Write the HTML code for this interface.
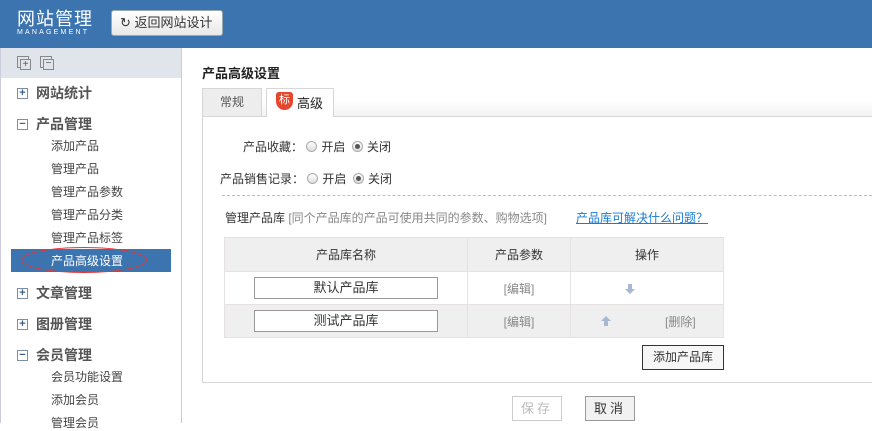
<!DOCTYPE html>
<html><head><meta charset="utf-8">
<style>
*{margin:0;padding:0;box-sizing:border-box}
body{width:872px;height:423px;overflow:hidden;background:#fff;font-family:"Liberation Sans","Noto Sans CJK SC",sans-serif;font-size:12px;color:#333;position:relative}
.a{position:absolute}
#hd{left:0;top:0;width:872px;height:48px;background:#3c74b0}
#sb{left:0;top:48px;width:182px;height:375px;border-left:1px solid #ccd;border-right:1px solid #ccc;background:#fff}
.t{font-size:14px;font-weight:bold;color:#555}
.s{font-size:12px;color:#444}
.box{width:11px;height:11px;border:1px solid #7d8ea6;font-size:11px;line-height:9px;text-align:center;color:#3c5f8a;font-weight:bold}
td,th{border:1px solid #e6e2e2;text-align:center;font-weight:normal;font-size:12px}
.inp{display:inline-block;width:184px;height:22px;border:1px solid #999;line-height:20px;font-size:13px;color:#333;background:#fff}
.rd{display:inline-block;width:11px;height:11px;border:1px solid #aaa;border-radius:50%;background:linear-gradient(#fff,#ddd);vertical-align:-1px;margin-right:4px;position:relative}
.rd.on::after{content:"";position:absolute;left:2px;top:2px;width:5px;height:5px;border-radius:50%;background:#555}
</style></head><body>
<div id="hd" class="a">
 <div class="a" style="left:17px;top:9px;color:#fff;font-size:18px;letter-spacing:1px;line-height:20px">网站管理</div>
 <div class="a" style="left:17px;top:29px;color:#fff;font-size:7px;letter-spacing:2.2px">MANAGEMENT</div>
 <div class="a" style="left:111px;top:10px;width:112px;height:26px;background:linear-gradient(#fff,#e8e8e8);border:1px solid #9aa;border-radius:3px;font-size:13px;line-height:24px;padding-left:8px;color:#333">↻ 返回网站设计</div>
</div>
<div id="sb" class="a">
 <div class="a" style="left:0;top:0;width:180px;height:30px;background:#e0e5ec"></div>
 <div class="a" style="left:16px;top:8px;width:12px;height:12px;border:1px solid #888"></div>
 <div class="a" style="left:19px;top:11px;width:11px;height:11px;border:1px solid #888;background:#e0e5ec;font-size:10px;line-height:9px;text-align:center;color:#555">+</div>
 <div class="a" style="left:39px;top:8px;width:12px;height:12px;border:1px solid #888"></div>
 <div class="a" style="left:42px;top:11px;width:11px;height:11px;border:1px solid #888;background:#e0e5ec;font-size:10px;line-height:8px;text-align:center;color:#555">−</div>
</div>
<div class="a box" style="left:17px;top:88px">+</div><div class="a t" style="left:36px;top:83px">网站统计</div>
<div class="a box" style="left:17px;top:119px">−</div><div class="a t" style="left:36px;top:114px">产品管理</div>
<div class="a s" style="left:51px;top:137px">添加产品</div>
<div class="a s" style="left:51px;top:160px">管理产品</div>
<div class="a s" style="left:51px;top:183px">管理产品参数</div>
<div class="a s" style="left:51px;top:206px">管理产品分类</div>
<div class="a s" style="left:51px;top:229px">管理产品标签</div>
<div class="a" style="left:11px;top:249px;width:160px;height:23px;background:#3c74b0"></div>
<div class="a" style="left:21px;top:247px;width:126px;height:26px;border:1px solid #e33;border-radius:50%"></div>
<div class="a s" style="left:51px;top:252px;color:#fff">产品高级设置</div>
<div class="a box" style="left:17px;top:288px">+</div><div class="a t" style="left:36px;top:283px">文章管理</div>
<div class="a box" style="left:17px;top:319px">+</div><div class="a t" style="left:36px;top:314px">图册管理</div>
<div class="a box" style="left:17px;top:350px">−</div><div class="a t" style="left:36px;top:345px">会员管理</div>
<div class="a s" style="left:51px;top:368px">会员功能设置</div>
<div class="a s" style="left:51px;top:391px">添加会员</div>
<div class="a s" style="left:51px;top:414px">管理会员</div>

<div class="a" style="left:202px;top:63px;font-size:13px;font-weight:bold;color:#222">产品高级设置</div>
<div class="a" style="left:202px;top:100px;width:670px;height:16px;background:linear-gradient(#fff,#f3f3f3)"></div>
<div class="a" style="left:202px;top:116px;width:670px;height:267px;border:1px solid #d6d6d6;border-right:none"></div>
<div class="a" style="left:202px;top:88px;width:60px;height:29px;background:#ededed;border:1px solid #d6d6d6;text-align:center;line-height:27px;color:#555;font-size:12px">常规</div>
<div class="a" style="left:266px;top:88px;width:68px;height:29px;background:#fff;border:1px solid #d6d6d6;border-bottom:none"></div>
<div class="a" style="left:276px;top:92px;width:17px;height:18px;background:#e5462e;border-radius:3px 3px 9px 9px;color:#fff;font-size:11px;text-align:center;line-height:17px">标</div>
<div class="a" style="left:297px;top:93px;font-size:13px;color:#222">高级</div>

<div class="a" style="left:243px;top:138px;color:#333">产品收藏： <span class="rd"></span>开启 &nbsp;<span class="rd on"></span>关闭</div>
<div class="a" style="left:220px;top:170px;color:#333">产品销售记录： <span class="rd"></span>开启 &nbsp;<span class="rd on"></span>关闭</div>
<div class="a" style="left:222px;top:195px;width:650px;border-top:1px dashed #a9c3d6"></div>
<div class="a" style="left:225px;top:209px;color:#333">管理产品库 <span style="color:#888">[同个产品库的产品可使用共同的参数、购物选项]</span></div>
<div class="a" style="left:576px;top:209px;color:#1a7bd0;text-decoration:underline">产品库可解决什么问题？</div>

<table class="a" style="left:224px;top:237px;width:500px;border-collapse:collapse">
<tr style="height:34px;background:#efefef"><th style="width:243px">产品库名称</th><th style="width:103px">产品参数</th><th>操作</th></tr>
<tr style="height:33px;background:#fff"><td><span class="inp">默认产品库</span></td><td style="color:#888">[编辑]</td><td></td></tr>
<tr style="height:33px;background:#efefef"><td><span class="inp">测试产品库</span></td><td style="color:#888">[编辑]</td><td style="text-align:left;padding-left:94px;color:#888">[删除]</td></tr>
</table>
<svg class="a" style="left:625px;top:284px" width="10" height="10" viewBox="0 0 10 10"><path d="M3 0H7V5H10L5 10L0 5H3Z" fill="#a6b8d2"/></svg>
<svg class="a" style="left:601px;top:316px" width="10" height="10" viewBox="0 0 10 10"><path d="M3 10H7V5H10L5 0L0 5H3Z" fill="#a6b8d2"/></svg>
<div class="a" style="left:642px;top:345px;width:82px;height:25px;border:1px solid #333;background:#f6f6f6;text-align:center;line-height:23px;color:#333">添加产品库</div>
<div class="a" style="left:512px;top:396px;width:50px;height:25px;border:1px solid #ccc;text-align:center;line-height:23px;color:#bbb;font-size:13px;letter-spacing:3px">保存</div>
<div class="a" style="left:585px;top:396px;width:50px;height:25px;border:1px solid #999;background:#f2f2f2;text-align:center;line-height:23px;color:#333;font-size:13px;letter-spacing:3px">取消</div>
</body></html>
